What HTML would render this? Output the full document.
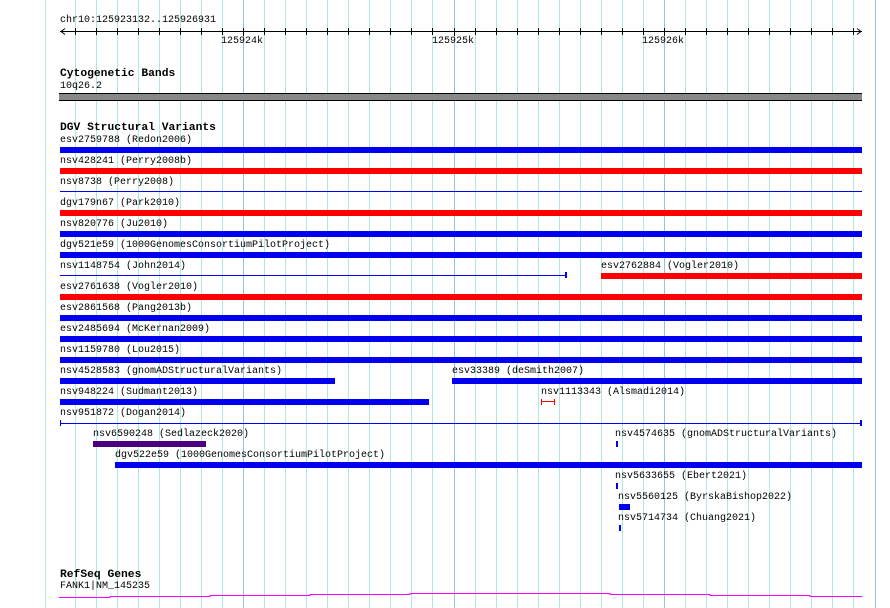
<!DOCTYPE html><html><head><style>
body{margin:0;width:890px;height:608px;position:relative;overflow:hidden;background:#fff;font-family:"Liberation Mono","DejaVu Sans Mono",monospace;font-size:10px;color:#000}
.t{position:absolute;white-space:pre;line-height:12px}
.h{position:absolute;white-space:pre;font-weight:bold;font-size:11.3px;line-height:12px}
.b{position:absolute;height:6px;background:#0000ee}
.r{background:#f00}
.l{position:absolute;height:1px;background:#0000ee}
</style></head><body>
<svg id="g" style="position:absolute;left:0;top:0" width="890" height="608"></svg>
<script>
var s='<line x1="45.5" y1="0" x2="45.5" y2="608" stroke="#aee6ea"/>',tk='';
for(var k=-8;k<=31;k++){var x=Math.round(243+k*21.05)+0.5;var maj=(k%10==0);
s+='<line x1="'+x+'" y1="0" x2="'+x+'" y2="608" stroke="'+(maj?'#8ec4e6':'#aee6ea')+'" stroke-width="1"/>';
if(x>60&&x<862)tk+='<line x1="'+x+'" y1="28" x2="'+x+'" y2="'+(maj?36:35)+'" stroke="#000"/>';}
s+='<line x1="60" y1="31.5" x2="862" y2="31.5" stroke="#000"/><polyline points="65,28.5 61,31.5 65,34.5" fill="none" stroke="#000"/><polyline points="857,28.5 861,31.5 857,34.5" fill="none" stroke="#000"/>'+tk;
s+='<polyline fill="none" stroke="#f0f" points="59,597.5 110,597.5 110,596.5 210,596.5 210,595.5 310,595.5 310,594.5 410,594.5 410,593.5 610,593.5 610,594.5 710,594.5 710,595.5 810,595.5 810,596.5 862,596.5"/>';
document.getElementById('g').innerHTML=s;
</script>
<div class="t" style="left:60px;top:15px">chr10:125923132..125926931</div>
<div class="t" style="left:221px;top:36px">125924k</div>
<div class="t" style="left:432px;top:36px">125925k</div>
<div class="t" style="left:642px;top:36px">125926k</div>
<div class="h" style="left:60px;top:68px">Cytogenetic Bands</div>
<div class="t" style="left:60px;top:81px">10q26.2</div>
<div style="position:absolute;left:59px;top:93px;width:803px;height:6px;background:#888;border-top:1px solid #000;border-bottom:1px solid #000"></div>
<div class="h" style="left:60px;top:122px">DGV Structural Variants</div>
<div class="t" style="left:60px;top:135px">esv2759788 (Redon2006)</div><div class="b" style="left:60px;top:147px;width:802px"></div>
<div class="t" style="left:60px;top:156px">nsv428241 (Perry2008b)</div><div class="b r" style="left:60px;top:168px;width:802px"></div>
<div class="t" style="left:60px;top:177px">nsv8738 (Perry2008)</div><div class="l" style="left:60px;top:191px;width:802px"></div>
<div class="t" style="left:60px;top:198px">dgv179n67 (Park2010)</div><div class="b r" style="left:60px;top:210px;width:802px"></div>
<div class="t" style="left:60px;top:219px">nsv820776 (Ju2010)</div><div class="b" style="left:60px;top:231px;width:802px"></div>
<div class="t" style="left:60px;top:240px">dgv521e59 (1000GenomesConsortiumPilotProject)</div><div class="b" style="left:60px;top:252px;width:802px"></div>
<div class="t" style="left:60px;top:261px">nsv1148754 (John2014)</div><div class="l" style="left:60px;top:275px;width:507px"></div><div class="b" style="left:565px;top:272px;width:2px"></div>
<div class="t" style="left:601px;top:261px">esv2762884 (Vogler2010)</div><div class="b r" style="left:601px;top:273px;width:261px"></div>
<div class="t" style="left:60px;top:282px">esv2761638 (Vogler2010)</div><div class="b r" style="left:60px;top:294px;width:802px"></div>
<div class="t" style="left:60px;top:303px">esv2861568 (Pang2013b)</div><div class="b" style="left:60px;top:315px;width:802px"></div>
<div class="t" style="left:60px;top:324px">esv2485694 (McKernan2009)</div><div class="b" style="left:60px;top:336px;width:802px"></div>
<div class="t" style="left:60px;top:345px">nsv1159780 (Lou2015)</div><div class="b" style="left:60px;top:357px;width:802px"></div>
<div class="t" style="left:60px;top:366px">nsv4528583 (gnomADStructuralVariants)</div><div class="b" style="left:60px;top:378px;width:275px"></div>
<div class="t" style="left:452px;top:366px">esv33389 (deSmith2007)</div><div class="b" style="left:452px;top:378px;width:410px"></div>
<div class="t" style="left:60px;top:387px">nsv948224 (Sudmant2013)</div><div class="b" style="left:60px;top:399px;width:369px"></div>
<div class="t" style="left:541px;top:387px">nsv1113343 (Alsmadi2014)</div>
<div style="position:absolute;left:541px;top:401px;width:14px;height:1px;background:#f00"></div><div style="position:absolute;left:541px;top:399px;width:1px;height:6px;background:#f00"></div><div style="position:absolute;left:554px;top:399px;width:1px;height:6px;background:#f00"></div>
<div class="t" style="left:60px;top:408px">nsv951872 (Dogan2014)</div><div class="l" style="left:60px;top:423px;width:802px"></div><div class="b" style="left:60px;top:420px;width:1px"></div><div class="b" style="left:860px;top:420px;width:2px"></div>
<div class="t" style="left:93px;top:429px">nsv6590248 (Sedlazeck2020)</div><div class="b" style="left:93px;top:441px;width:113px;background:#4b0082"></div>
<div class="t" style="left:615px;top:429px">nsv4574635 (gnomADStructuralVariants)</div><div class="b" style="left:616px;top:441px;width:2px"></div>
<div class="t" style="left:115px;top:450px">dgv522e59 (1000GenomesConsortiumPilotProject)</div><div class="b" style="left:115px;top:462px;width:747px"></div>
<div class="t" style="left:615px;top:471px">nsv5633655 (Ebert2021)</div><div class="b" style="left:616px;top:483px;width:2px"></div>
<div class="t" style="left:618px;top:492px">nsv5560125 (ByrskaBishop2022)</div><div class="b" style="left:619px;top:504px;width:11px"></div>
<div class="t" style="left:618px;top:513px">nsv5714734 (Chuang2021)</div><div class="b" style="left:619px;top:525px;width:2px"></div>
<div class="h" style="left:60px;top:569px">RefSeq Genes</div>
<div class="t" style="left:60px;top:581px">FANK1|NM_145235</div>
</body></html>
